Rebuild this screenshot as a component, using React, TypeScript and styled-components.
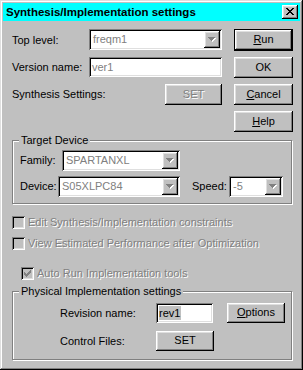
import React from 'react'
import styled, { createGlobalStyle, css } from 'styled-components'

const GlobalStyle = createGlobalStyle`
  html, body {
    margin: 0;
    padding: 0;
    background: #c0c0c0;
  }
  body {
    font-family: 'Liberation Sans', Arial, sans-serif;
    font-size: 11px;
    color: #000;
  }
`

const raised = css`
  box-shadow: inset -1px -1px 0 #000, inset 1px 1px 0 #fff,
    inset -2px -2px 0 #808080, inset 2px 2px 0 #dfdfdf;
`

const sunken = css`
  box-shadow: inset 1px 1px 0 #808080, inset -1px -1px 0 #fff,
    inset 2px 2px 0 #000, inset -2px -2px 0 #dfdfdf;
`

const disabledText = css`
  color: #808080;
  text-shadow: 1px 1px 0 #fff;
`

const CloseGlyph = () => (
  <svg width="8" height="7" viewBox="0 0 8 7" shapeRendering="crispEdges">
    <path
      fill="#000"
      d="M0 0h2v1H0zM6 0h2v1H6zM1 1h2v1H1zM5 1h2v1H5zM2 2h4v1H2zM3 3h2v1H3zM2 4h4v1H2zM1 5h2v1H1zM5 5h2v1H5zM0 6h2v1H0zM6 6h2v1H6z"
    />
  </svg>
)

const ArrowGlyph = () => (
  <svg width="8" height="5" viewBox="0 0 8 5" shapeRendering="crispEdges">
    <path fill="#fff" d="M1 1h7v1H1zM2 2h5v1H2zM3 3h3v1H3zM4 4h1v1H4z" />
    <path fill="#808080" d="M0 0h7v1H0zM1 1h5v1H1zM2 2h3v1H2zM3 3h1v1H3z" />
  </svg>
)

const CheckGlyph = () => (
  <svg width="7" height="7" viewBox="0 0 7 7" shapeRendering="crispEdges">
    <path
      fill="#808080"
      d="M6 0h1v1H6zM5 1h2v1H5zM0 2h1v1H0zM4 2h3v1H4zM0 3h2v1H0zM3 3h3v1H3zM0 4h5v1H0zM1 5h3v1H1zM2 6h1v1H2z"
    />
  </svg>
)

const App = () => {
  return (
    <>
      <GlobalStyle />
      <Window>
        <TitleBar>
          <Title>Synthesis/Implementation settings</Title>
          <CloseButton>
            <CloseGlyph />
          </CloseButton>
        </TitleBar>
        <Client>
          <TopGrid>
            <Label>Top level:</Label>
            <Combo $w={133}>
              <ComboText>freqm1</ComboText>
              <ArrowButton>
                <ArrowGlyph />
              </ArrowButton>
            </Combo>
            <Button $default $h={22}>
              <u>R</u>un
            </Button>

            <Label>Version name:</Label>
            <TextField $w={133}>
              <FieldText $muted>ver1</FieldText>
            </TextField>
            <Button>OK</Button>

            <Label>Synthesis Settings:</Label>
            <Button $w={57} $disabled $end>
              SET
            </Button>
            <Button>
              <u>C</u>ancel
            </Button>

            <Spacer />
            <Spacer />
            <Button>
              <u>H</u>elp
            </Button>
          </TopGrid>

          <Group $mt={8}>
            <Legend>Target Device</Legend>
            <GroupBody $pt={3} $pb={6} $pl={7} $gap={5}>
              <FormRow $h={21}>
                <Label $w={42}>Family:</Label>
                <Combo $w={118}>
                  <ComboText>SPARTANXL</ComboText>
                  <ArrowButton>
                    <ArrowGlyph />
                  </ArrowButton>
                </Combo>
              </FormRow>
              <FormRow $h={21}>
                <Label $w={38}>Device:</Label>
                <Combo $w={122}>
                  <ComboText>S05XLPC84</ComboText>
                  <ArrowButton>
                    <ArrowGlyph />
                  </ArrowButton>
                </Combo>
                <Label $w={37} $ml={12}>
                  Speed:
                </Label>
                <Combo $w={54}>
                  <ComboText>-5</ComboText>
                  <ArrowButton>
                    <ArrowGlyph />
                  </ArrowButton>
                </Combo>
              </FormRow>
            </GroupBody>
          </Group>

          <CheckRow $mt={12}>
            <CheckBox />
            <CheckLabel>Edit Synthesis/Implementation constraints</CheckLabel>
          </CheckRow>
          <CheckRow $mt={8}>
            <CheckBox />
            <CheckLabel>View Estimated Performance after Optimization</CheckLabel>
          </CheckRow>
          <CheckRow $mt={17} $ml={9}>
            <CheckBox>
              <CheckGlyph />
            </CheckBox>
            <CheckLabel>Auto Run Implementation tools</CheckLabel>
          </CheckRow>

          <Group $mt={11}>
            <Legend>Physical Implementation settings</Legend>
            <GroupBody $pt={5} $pb={8} $pl={47} $gap={8}>
              <FormRow $h={20}>
                <Label $w={96}>Revision name:</Label>
                <TextField $w={57} $h={20}>
                  <Selected>rev1</Selected>
                </TextField>
                <Button $w={58} $h={20} $ml={14}>
                  <u>O</u>ptions
                </Button>
              </FormRow>
              <FormRow $h={20}>
                <Label $w={96}>Control Files:</Label>
                <Button $w={58} $h={20}>
                  SET
                </Button>
              </FormRow>
            </GroupBody>
          </Group>
        </Client>
      </Window>
    </>
  )
}

export default App

const Window = styled.div`
  width: 303px;
  height: 370px;
  box-sizing: border-box;
  padding: 3px;
  background: #c0c0c0;
  box-shadow: inset -1px -1px 0 #000, inset 1px 1px 0 #dfdfdf,
    inset -2px -2px 0 #808080, inset 2px 2px 0 #fff;
  display: flex;
  flex-direction: column;
  overflow: hidden;
`

const TitleBar = styled.div`
  height: 18px;
  flex-shrink: 0;
  background: #00ffff;
  display: flex;
  align-items: center;
  justify-content: space-between;
  padding: 0 2px 0 3px;
`

const Title = styled.span`
  font-weight: bold;
  font-size: 11.5px;
  line-height: 18px;
  white-space: nowrap;
`

const CloseButton = styled.div`
  width: 16px;
  height: 14px;
  box-sizing: border-box;
  background: #c0c0c0;
  ${raised};
  display: flex;
  align-items: center;
  justify-content: center;
  padding: 0 1px 1px 0;
`

const Client = styled.div`
  flex: 1;
  min-width: 0;
  display: flex;
  flex-direction: column;
  padding: 8px 7px 0 9px;
`

const TopGrid = styled.div`
  display: grid;
  grid-template-columns: 65px 133px 59px;
  grid-template-rows: 22px 21px 21px 21px;
  column-gap: 12px;
  row-gap: 6px;
  align-items: start;
`

const Spacer = styled.div``

const Label = styled.span<{ $w?: number; $ml?: number }>`
  align-self: center;
  white-space: nowrap;
  flex-shrink: 0;
  width: ${({ $w }) => ($w ? `${$w}px` : 'auto')};
  margin-left: ${({ $ml }) => $ml || 0}px;
  line-height: 13px;
`

const Combo = styled.div<{ $w: number }>`
  width: ${({ $w }) => $w}px;
  height: 21px;
  box-sizing: border-box;
  padding: 2px;
  background: #fff;
  ${sunken};
  display: flex;
  align-items: stretch;
  flex-shrink: 0;
`

const ComboText = styled.div`
  flex: 1;
  padding-left: 2px;
  color: #808080;
  line-height: 17px;
  white-space: nowrap;
  overflow: hidden;
`

const ArrowButton = styled.div`
  width: 16px;
  background: #c0c0c0;
  ${raised};
  display: flex;
  align-items: center;
  justify-content: center;
  padding-bottom: 1px;
  box-sizing: border-box;
`

const TextField = styled.div<{ $w: number; $h?: number }>`
  width: ${({ $w }) => $w}px;
  height: ${({ $h }) => $h || 20}px;
  box-sizing: border-box;
  flex-shrink: 0;
  padding: 2px 2px 2px 3px;
  background: #fff;
  ${sunken};
  display: flex;
  align-items: center;
`

const FieldText = styled.span<{ $muted?: boolean }>`
  color: ${({ $muted }) => ($muted ? '#808080' : '#000')};
  line-height: 14px;
`

const Selected = styled.span`
  background: #c0c0c0;
  color: #000;
  line-height: 14px;
  padding-right: 1px;
`

const Button = styled.div<{
  $w?: number
  $h?: number
  $ml?: number
  $default?: boolean
  $disabled?: boolean
  $end?: boolean
}>`
  width: ${({ $w }) => $w || 59}px;
  height: ${({ $h }) => $h || 21}px;
  box-sizing: border-box;
  flex-shrink: 0;
  margin-left: ${({ $ml }) => $ml || 0}px;
  justify-self: ${({ $end }) => ($end ? 'end' : 'start')};
  background: #c0c0c0;
  border: ${({ $default }) => ($default ? '1px solid #000' : '0')};
  ${raised};
  display: flex;
  align-items: center;
  justify-content: center;
  line-height: 13px;
  padding-bottom: 1px;
  ${({ $disabled }) => $disabled && disabledText};

  u {
    text-decoration: underline;
    text-underline-offset: 1px;
  }
`

const Group = styled.div<{ $mt: number }>`
  margin-top: ${({ $mt }) => $mt}px;
  margin-right: 1px;
  border: 1px solid #808080;
  box-shadow: inset 1px 1px 0 #fff, 1px 1px 0 #fff;
  display: flex;
  flex-direction: column;
`

const Legend = styled.span`
  align-self: flex-start;
  margin: -7px 0 0 6px;
  padding: 0 2px;
  background: #c0c0c0;
  line-height: 13px;
  white-space: nowrap;
`

const GroupBody = styled.div<{ $pt: number; $pb: number; $pl: number; $gap: number }>`
  display: flex;
  flex-direction: column;
  gap: ${({ $gap }) => $gap}px;
  padding: ${({ $pt, $pb, $pl }) => `${$pt}px 0 ${$pb}px ${$pl}px`};
`

const FormRow = styled.div<{ $h: number }>`
  display: flex;
  align-items: center;
  height: ${({ $h }) => $h}px;
`

const CheckRow = styled.div<{ $mt: number; $ml?: number }>`
  display: flex;
  align-items: center;
  gap: 3px;
  height: 13px;
  margin-top: ${({ $mt }) => $mt}px;
  margin-left: ${({ $ml }) => $ml || 0}px;
`

const CheckBox = styled.span`
  width: 13px;
  height: 13px;
  box-sizing: border-box;
  background: #c0c0c0;
  ${sunken};
  display: flex;
  align-items: center;
  justify-content: center;
  flex-shrink: 0;
`

const CheckLabel = styled.span`
  ${disabledText};
  white-space: nowrap;
  line-height: 13px;
`
